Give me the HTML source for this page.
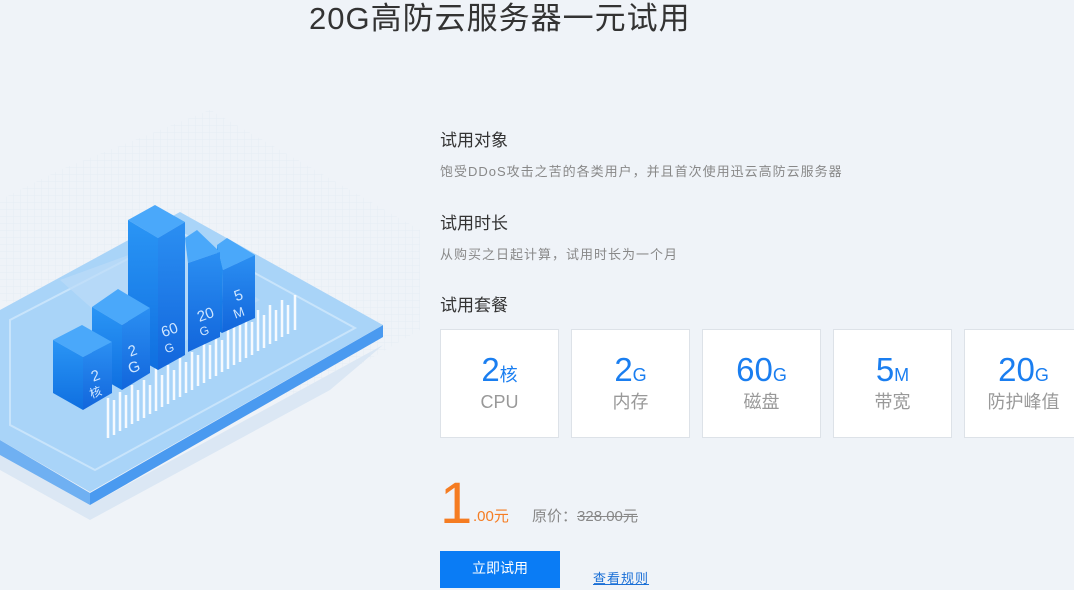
<!DOCTYPE html>
<html><head><meta charset="utf-8">
<style>
html,body{margin:0;padding:0}
body{width:1074px;height:590px;overflow:hidden;background:#eff3f8;position:relative;font-family:"Liberation Sans","Noto Sans CJK SC",sans-serif}
.t{position:absolute;white-space:nowrap}
.card{position:absolute;top:329px;width:117px;height:107px;background:#fff;border:1px solid #dde2e8;text-align:center}
.card .n{margin-top:20px;font-size:33px;color:#1a7ef0;line-height:40px}
.card .n span{font-size:18px}
.card .l{font-size:18px;color:#999;line-height:22px;margin-top:-4px}
</style></head><body>
<svg class="t" style="left:0;top:0" width="420" height="590" viewBox="0 0 420 590">
<defs>
<pattern id="g" width="7" height="7" patternUnits="userSpaceOnUse"><path d="M7 0V7M0 7H7" stroke="#dfe8f2" stroke-width="1" fill="none"/></pattern>
<linearGradient id="lf" x1="0" y1="0" x2="0" y2="1"><stop offset="0" stop-color="#2a95f5"/><stop offset="1" stop-color="#0f6fe0"/></linearGradient>
<linearGradient id="rf" x1="0" y1="0" x2="0" y2="1"><stop offset="0" stop-color="#2b8ff2"/><stop offset="1" stop-color="#1266dc"/></linearGradient>
</defs>
<polygon points="60,170 210,110 420,230 420,330 300,400 0,300 0,200" fill="url(#g)" opacity="0.6"/>
<polygon points="0,470 90,520 330,390 383,345 90,505 0,455" fill="#dbe7f4"/>
<polygon points="383,325 383,337 90,505 90,493" fill="#4a9af0"/>
<polygon points="0,440 90,493 90,505 0,455" fill="#6fb0f2"/>
<polygon points="180,212 383,325 90,492 0,440 0,310" fill="#a9d4f8"/>
<polygon points="180,232 355,328 95,470 10,425 10,320" fill="none" stroke="#c8e4fb" stroke-width="2"/>
<polygon points="60,280 170,240 260,300 150,360" fill="#bcdcf8" opacity="0.7"/>
<g stroke="#fff" stroke-width="2.5" opacity="0.9">
<line x1="108" y1="438" x2="108" y2="398"/><line x1="114" y1="435" x2="114" y2="400"/><line x1="120" y1="431" x2="120" y2="392"/><line x1="126" y1="428" x2="126" y2="395"/><line x1="132" y1="424" x2="132" y2="385"/><line x1="138" y1="421" x2="138" y2="390"/><line x1="144" y1="418" x2="144" y2="380"/><line x1="150" y1="414" x2="150" y2="385"/><line x1="156" y1="411" x2="156" y2="368"/><line x1="162" y1="407" x2="162" y2="375"/><line x1="168" y1="404" x2="168" y2="365"/><line x1="174" y1="400" x2="174" y2="370"/><line x1="180" y1="397" x2="180" y2="358"/><line x1="186" y1="393" x2="186" y2="362"/><line x1="192" y1="390" x2="192" y2="352"/><line x1="198" y1="386" x2="198" y2="355"/><line x1="204" y1="383" x2="204" y2="340"/><line x1="210" y1="379" x2="210" y2="345"/><line x1="216" y1="376" x2="216" y2="335"/><line x1="222" y1="372" x2="222" y2="340"/><line x1="228" y1="369" x2="228" y2="330"/><line x1="234" y1="365" x2="234" y2="320"/><line x1="240" y1="362" x2="240" y2="325"/><line x1="246" y1="358" x2="246" y2="318"/><line x1="252" y1="355" x2="252" y2="322"/><line x1="258" y1="351" x2="258" y2="310"/><line x1="264" y1="348" x2="264" y2="315"/><line x1="270" y1="344" x2="270" y2="305"/><line x1="276" y1="341" x2="276" y2="310"/><line x1="282" y1="337" x2="282" y2="300"/><line x1="288" y1="334" x2="288" y2="305"/><line x1="295" y1="330" x2="295" y2="295"/>
</g>
<polygon points="217,245 227,238 255,255 223,270" fill="#4aa8fa"/>
<polygon points="217,245 223,270 222,333 217,330" fill="url(#lf)"/>
<polygon points="223,270 255,255 255,318 222,333" fill="url(#rf)"/>
<polygon points="185,238 197,230 220,252 188,263" fill="#4aa8fa"/>
<polygon points="188,263 220,252 220,337 188,352" fill="url(#rf)"/>
<polygon points="128,220 155,205 185,222 158,238" fill="#4aa8fa"/>
<polygon points="128,220 158,238 158,370 128,353" fill="url(#lf)"/>
<polygon points="158,238 185,222 185,355 158,370" fill="url(#rf)"/>
<polygon points="92,307 118,289 150,308 122,325" fill="#4aa8fa"/>
<polygon points="92,307 122,325 122,390 92,373" fill="url(#lf)"/>
<polygon points="122,325 150,308 150,373 122,390" fill="url(#rf)"/>
<polygon points="53,340 82,325 112,342 83,357" fill="#4aa8fa"/>
<polygon points="53,340 83,357 83,410 53,393" fill="url(#lf)"/>
<polygon points="83,357 112,342 112,393 83,410" fill="url(#rf)"/>
<g font-family="Liberation Sans,Noto Sans CJK SC,sans-serif" font-size="15">
<text x="93" y="380" fill="#cfe6ff" transform="rotate(-20 98 380)">2</text>
<text x="91" y="396" fill="#cfe6ff" font-size="12" transform="rotate(-20 98 396)">核</text>
<text x="130" y="355" fill="#cfe6ff" transform="rotate(-20 135 355)">2</text>
<text x="130" y="372" fill="#cfe6ff" transform="rotate(-20 135 372)">G</text>
<text x="163" y="335" fill="#cfe6ff" transform="rotate(-20 170 335)">60</text>
<text x="166" y="352" fill="#cfe6ff" font-size="12" transform="rotate(-20 170 352)">G</text>
<text x="199" y="320" fill="#cfe6ff" transform="rotate(-20 205 320)">20</text>
<text x="201" y="335" fill="#cfe6ff" font-size="12" transform="rotate(-20 205 335)">G</text>
<text x="236" y="300" fill="#cfe6ff" transform="rotate(-20 240 300)">5</text>
<text x="235" y="317" fill="#cfe6ff" font-size="13" transform="rotate(-20 240 317)">M</text>
</g>
</svg>
<div class="t" style="left:309px;top:0;font-size:31px;letter-spacing:1px;color:#333;line-height:38px">20G高防云服务器一元试用</div>
<div class="t" style="left:440px;top:126px;font-size:17px;color:#333">试用对象</div>
<div class="t" style="left:440px;top:161px;font-size:13px;letter-spacing:1px;color:#888">饱受DDoS攻击之苦的各类用户，并且首次使用迅云高防云服务器</div>
<div class="t" style="left:440px;top:209px;font-size:17px;color:#333">试用时长</div>
<div class="t" style="left:440px;top:244px;font-size:13px;letter-spacing:1px;color:#888">从购买之日起计算，试用时长为一个月</div>
<div class="t" style="left:440px;top:291px;font-size:17px;color:#333">试用套餐</div>
<div class="card" style="left:440px"><div class="n">2<span>核</span></div><div class="l">CPU</div></div>
<div class="card" style="left:571px"><div class="n">2<span>G</span></div><div class="l">内存</div></div>
<div class="card" style="left:702px"><div class="n">60<span>G</span></div><div class="l">磁盘</div></div>
<div class="card" style="left:833px"><div class="n">5<span>M</span></div><div class="l">带宽</div></div>
<div class="card" style="left:964px"><div class="n">20<span>G</span></div><div class="l">防护峰值</div></div>
<div class="t" style="left:440px;top:474px;font-size:58px;color:#f57c22;line-height:60px">1</div>
<div class="t" style="left:473px;top:505px;font-size:15px;color:#f57c22">.00元</div>
<div class="t" style="left:532px;top:505px;font-size:15px;color:#888">原价：<span style="text-decoration:line-through">328.00元</span></div>
<div class="t" style="left:440px;top:551px;width:120px;height:37px;background:#0a7cf5;color:#fff;font-size:14px;line-height:35px;text-align:center">立即试用</div>
<div class="t" style="left:593px;top:568px;font-size:13px;letter-spacing:1px;color:#1a6fd6;text-decoration:underline">查看规则</div>
</body></html>
